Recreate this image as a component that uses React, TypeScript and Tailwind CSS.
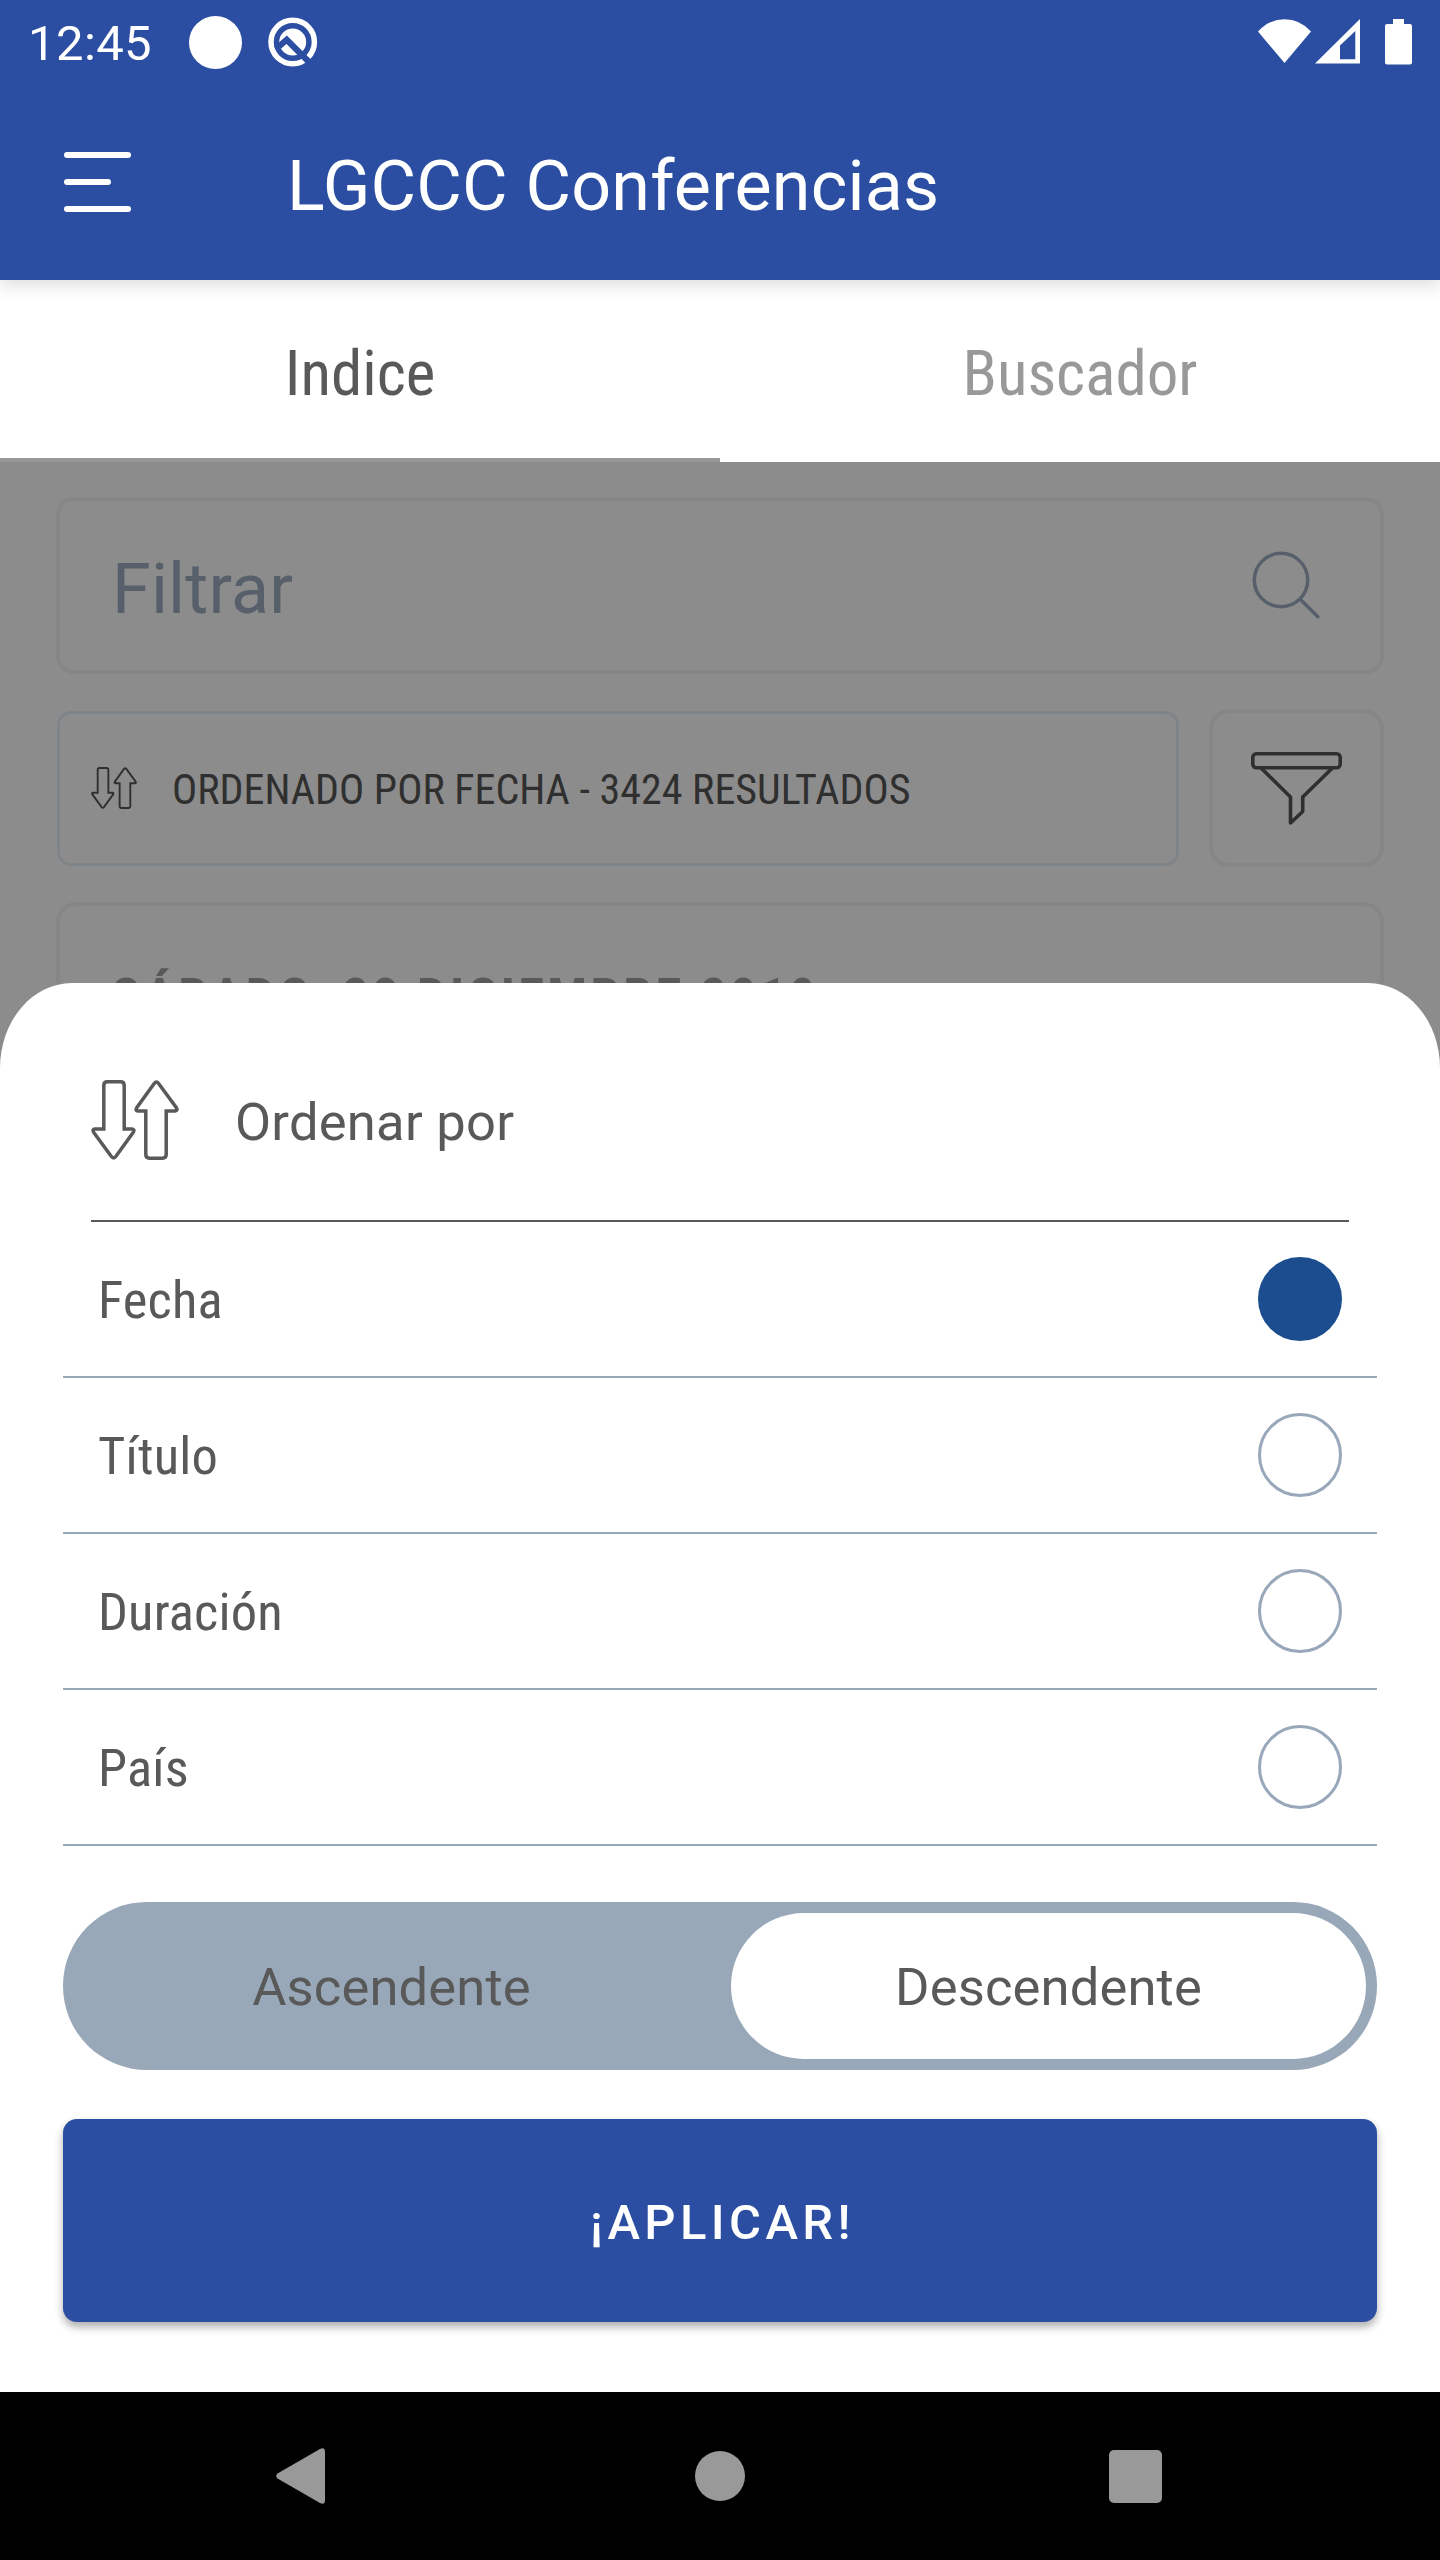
import React, { useState } from 'react';

type SortField = 'Fecha' | 'Título' | 'Duración' | 'País';
type Direction = 'Ascendente' | 'Descendente';

const sortFields: SortField[] = ['Fecha', 'Título', 'Duración', 'País'];
const directions: Direction[] = ['Ascendente', 'Descendente'];

interface IconProps {
  className?: string;
}

function SortIcon({ className, strokeWidth = 3.5 }: IconProps & { strokeWidth?: number }) {
  const arrow =
    'M16.5 1.8H29.5Q33.2 1.8 33.2 5.5V49H41Q44 49.3 42.3 52.2L24.8 76.5Q22.6 79.3 20.4 76.5L2.6 52.2Q1 49.3 4 49H12.8V5.5Q12.8 1.8 16.5 1.8Z';
  return (
    <svg viewBox="0 0 88 80" fill="none" stroke="currentColor" strokeWidth={strokeWidth} className={className}>
      <path d={arrow} />
      <path d={arrow} transform="rotate(180 44 40)" />
    </svg>
  );
}

function StatusBar() {
  return (
    <div className="flex h-[84px] items-center justify-between pl-[28px] pr-[28px]">
      <div className="flex items-center">
        <span className="w-[125px] pt-[3px] text-[49px] leading-none tracking-[0.4px]">12:45</span>
        <span className="ml-9 h-[53px] w-[53px] rounded-full bg-white" />
        <svg viewBox="0 0 50 50" className="ml-[26px] h-[50px] w-[50px]">
          <circle cx="24.7" cy="25" r="21.7" fill="none" stroke="#fff" strokeWidth="5.5" />
          <circle cx="24.7" cy="25" r="13.5" fill="#fff" />
          <path d="M8 32L18.7 22.7L42 46" fill="none" stroke="#2b4ea2" strokeWidth="6.2" />
        </svg>
      </div>
      <div className="flex items-start">
        <svg viewBox="0 0 53 45" className="h-[45px] w-[53px]" fill="#fff">
          <path d="M0 12.5Q11 0.3 26.5 0.3T53 12.5L26.5 44Z" />
        </svg>
        <svg viewBox="0 0 45 45" className="ml-1 h-[45px] w-[45px]" fill="#fff">
          <path fillRule="evenodd" d="M45 0V44.5H0ZM40.3 12L25 26.5V40.3H40.3Z" />
        </svg>
        <svg viewBox="0 0 27 46" className="ml-[25px] h-[46px] w-[27px]" fill="#fff">
          <path d="M8 0H19V5H25Q27 5 27 7V43.5Q27 45.5 25 45.5H2Q0 45.5 0 43.5V7Q0 5 2 5H8Z" />
        </svg>
      </div>
    </div>
  );
}

function Header() {
  return (
    <header className="relative z-10 h-[280px] bg-[#2b4ea2] text-white shadow-[0_4px_18px_rgba(0,0,0,0.15)]">
      <StatusBar />
      <div className="flex h-[196px] items-center pl-16">
        <div className="flex w-[67px] flex-col gap-[21px] pb-px">
          <span className="h-1.5 w-full rounded-full bg-white" />
          <span className="h-1.5 w-[47px] rounded-full bg-white" />
          <span className="h-1.5 w-full rounded-full bg-white" />
        </div>
        <h1 className="ml-[156px] pt-2 text-[70px] leading-none tracking-[0.2px]">LGCCC Conferencias</h1>
      </div>
    </header>
  );
}

function Tabs() {
  return (
    <nav className="flex h-[182px] bg-white text-[63px] leading-none font-stretch-condensed">
      <div className="flex flex-1 items-center justify-center border-b-4 border-[#979797] pt-[9px] text-[#595959]">
        Indice
      </div>
      <div className="flex flex-1 items-center justify-center border-b-4 border-white pt-[9px] text-[#999]">
        Buscador
      </div>
    </nav>
  );
}

function ConferenceList() {
  return (
    <div className="px-14 pt-[35px]">
      <div className="flex h-[177px] items-center justify-between rounded-[18px] border-4 border-[#f4f4f4] pl-[52px] pr-[60px] text-[#9daec1]">
        <span className="pt-1.5 text-[70px] leading-none tracking-[0.2px]">Filtrar</span>
        <svg viewBox="0 0 68 68" className="mb-0.5 h-[68px] w-[68px]" fill="none" stroke="currentColor" strokeWidth="3.5" strokeLinecap="round">
          <circle cx="29" cy="29" r="26.7" />
          <path d="M48.5 48.5L65.8 65.8" />
        </svg>
      </div>

      <div className="mt-[35px] flex h-[158px] items-center justify-between">
        <div className="ml-px flex h-[155px] w-[1122px] items-center rounded-[14px] border-[3px] border-[#e7f0f7] pl-[31px] text-[#575757]">
          <SortIcon className="h-[42px] w-[46px]" strokeWidth={3.6} />
          <span className="ml-[35px] pt-[3px] text-[42px] leading-none whitespace-nowrap font-stretch-condensed">
            ORDENADO POR FECHA - 3424 RESULTADOS
          </span>
        </div>
        <div className="flex h-[158px] w-[175px] justify-center rounded-[20px] border-4 border-[#f4f4f4] pt-[39px] text-[#575757]">
          <svg viewBox="0 0 91 73" className="h-[73px] w-[91px]" fill="none" stroke="currentColor" strokeWidth="3.6" strokeLinejoin="round">
            <rect x="1.8" y="1.8" width="87.4" height="14" rx="3.5" />
            <path d="M10 16L39.5 45V71L51.7 59.5V45L81.5 16" />
          </svg>
        </div>
      </div>

      <div className="mt-[35px] h-[400px] rounded-[20px] border-4 border-[#f4f4f4] pl-[52px] pt-[65px]">
        <div className="text-[52.5px] leading-none tracking-[3.3px] font-bold text-[#a3a3a3] font-stretch-condensed">
          SÁBADO, 28 DICIEMBRE 2019
        </div>
      </div>
    </div>
  );
}

function SortSheet() {
  const [field, setField] = useState<SortField>('Fecha');
  const [direction, setDirection] = useState<Direction>('Descendente');

  return (
    <div className="absolute inset-x-0 bottom-0 h-[1409px] rounded-[72px_72px_0_0/85px_85px_0_0] bg-white px-[63px] text-[52.5px] leading-none text-[#595959]">
      <div className="mx-7 flex h-[239px] items-center border-b-2 border-[#595959] pt-[37px]">
        <SortIcon className="h-[80px] w-[88px]" />
        <span className="ml-14 pt-[5px] tracking-[0.25px]">Ordenar por</span>
      </div>

      {sortFields.map(f => (
        <button
          key={f}
          type="button"
          onClick={() => setField(f)}
          className="flex h-[156px] w-full items-center justify-between border-b-2 border-[#98a7b9] pl-[35px] pr-[35px]"
        >
          <span className="pt-[3px] tracking-[0.15px] font-stretch-condensed">{f}</span>
          <span
            className={`h-[84px] w-[84px] rounded-full border-[3px] ${
              field === f ? 'border-[#1c4e8f] bg-[#1c4e8f]' : 'border-[#98a7b9]'
            }`}
          />
        </button>
      ))}

      <div className="mt-14 flex h-[168px] items-center justify-between rounded-full bg-[#99a8b8] px-[11px]">
        {directions.map(d => (
          <button
            key={d}
            type="button"
            onClick={() => setDirection(d)}
            className={`h-[146px] w-[635px] rounded-full pt-[3px] tracking-[0.15px] ${direction === d ? 'bg-white' : ''}`}
          >
            {d}
          </button>
        ))}
      </div>

      <button
        type="button"
        className="mt-[49px] h-[203px] w-full rounded-[14px] bg-[#2b4ea2] pl-[5px] pt-[3px] text-[49px] font-medium tracking-[4.4px] text-white shadow-[0_5px_9px_rgba(0,0,0,0.32)]"
      >
        ¡APLICAR!
      </button>
    </div>
  );
}

function NavigationBar() {
  return (
    <div className="flex h-[168px] items-center bg-black pl-[276px]">
      <svg viewBox="0 0 49 56" className="h-[56px] w-[49px]" fill="#999">
        <path d="M1.5 25.5L44 1Q49 -1.5 49 4V52Q49 57.5 44 55L1.5 30.5Q-1.2 28 1.5 25.5Z" />
      </svg>
      <span className="ml-[370px] h-[50px] w-[50px] rounded-full bg-[#999]" />
      <span className="ml-[364px] h-[53px] w-[53px] rounded-[5px] bg-[#999]" />
    </div>
  );
}

export default function App() {
  return (
    <div className="flex h-[2560px] w-[1440px] flex-col overflow-hidden bg-white font-['Roboto',sans-serif]">
      <Header />
      <Tabs />
      <main className="relative flex-1 overflow-hidden">
        <ConferenceList />
        <div className="absolute inset-0 bg-black/45" />
        <SortSheet />
      </main>
      <NavigationBar />
    </div>
  );
}
